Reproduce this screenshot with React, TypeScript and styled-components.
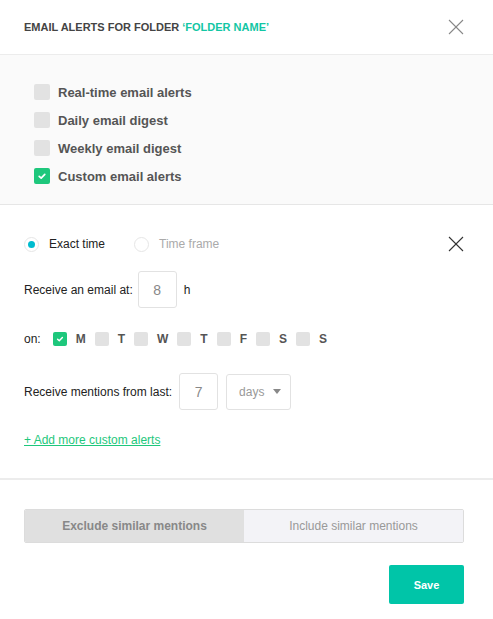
import React from "react";
import styled, { createGlobalStyle } from "styled-components";

const Global = createGlobalStyle`
  html, body { margin: 0; padding: 0; background: #fff; }
  body { font-family: "Liberation Sans", Arial, Helvetica, sans-serif; }
  * { box-sizing: border-box; }
`;

const Panel = styled.div`
  width: 493px;
  height: 619px;
  background: #fff;
  display: flex;
  flex-direction: column;
`;

const Header = styled.div`
  height: 55px;
  padding: 0 29px 0 24px;
  display: flex;
  align-items: center;
  justify-content: space-between;
  border-bottom: 1px solid #ececec;
`;

const Title = styled.div`
  font-size: 11px;
  font-weight: bold;
  color: #444;
  text-transform: uppercase;
`;

const Accent = styled.span`
  color: #12c6a4;
`;

const CloseBtn = styled.button<{ $dark?: boolean }>`
  border: 0;
  background: none;
  padding: 0;
  width: 16px;
  height: 16px;
  display: flex;
  cursor: pointer;
  svg line { stroke: ${(p) => (p.$dark ? "#333" : "#888")}; }
`;

const TypeSection = styled.div`
  background: #fafafa;
  padding: 23px 34px 14px;
  border-bottom: 1px solid #e6e6e6;
  display: flex;
  flex-direction: column;
`;

const TypeRow = styled.label`
  height: 28px;
  display: flex;
  align-items: center;
  gap: 8px;
  font-size: 13px;
  font-weight: bold;
  color: #555;
`;

const Box = styled.span<{ $checked?: boolean; $size: number }>`
  width: ${(p) => p.$size}px;
  height: ${(p) => p.$size}px;
  border-radius: 2px;
  background: ${(p) => (p.$checked ? "#1ec77c" : "#e2e2e2")};
  display: inline-flex;
  align-items: center;
  justify-content: center;
  flex-shrink: 0;
`;

const CustomSection = styled.div`
  padding: 29px 29px 0 24px;
  height: 275px;
  border-bottom: 2px solid #ececec;
  display: flex;
  flex-direction: column;
`;

const ModeRow = styled.div`
  height: 20px;
  display: flex;
  align-items: center;
  justify-content: space-between;
`;

const Radios = styled.div`
  display: flex;
  align-items: center;
`;

const RadioItem = styled.label<{ $active?: boolean }>`
  display: flex;
  align-items: center;
  gap: 10px;
  font-size: 12px;
  color: ${(p) => (p.$active ? "#222" : "#aaa")};
  margin-right: 29px;
`;

const RadioCircle = styled.span<{ $on?: boolean }>`
  width: 15px;
  height: 15px;
  border-radius: 50%;
  border: 1px solid #e6e6e6;
  background: #fff;
  display: inline-flex;
  align-items: center;
  justify-content: center;
  &::after {
    content: "";
    width: 7px;
    height: 7px;
    border-radius: 50%;
    background: ${(p) => (p.$on ? "#00bccf" : "transparent")};
  }
`;

const FieldRow = styled.div<{ $mt: number }>`
  display: flex;
  align-items: center;
  margin-top: ${(p) => p.$mt}px;
  font-size: 12px;
  color: #222;
`;

const NumBox = styled.div<{ $ml: number }>`
  width: 39px;
  height: 37px;
  border: 1px solid #e2e2e2;
  border-radius: 3px;
  display: flex;
  align-items: center;
  justify-content: center;
  font-size: 14px;
  color: #888;
  margin-left: ${(p) => p.$ml}px;
`;

const Unit = styled.span`
  margin-left: 7px;
`;

const Days = styled.div`
  display: flex;
  align-items: center;
  margin-left: 12px;
`;

const Day = styled.label`
  display: flex;
  align-items: center;
  gap: 9px;
  font-size: 12px;
  font-weight: bold;
  color: #555;
  margin-right: 9px;
`;

const Select = styled.div`
  width: 65px;
  height: 36px;
  border: 1px solid #e2e2e2;
  border-radius: 3px;
  display: flex;
  align-items: center;
  justify-content: space-between;
  padding: 0 9px 0 12px;
  font-size: 12px;
  color: #999;
  margin-left: 8px;
`;

const Caret = styled.span`
  width: 0;
  height: 0;
  border-left: 4px solid transparent;
  border-right: 4px solid transparent;
  border-top: 5px solid #888;
`;

const AddLink = styled.a`
  margin-top: 23px;
  font-size: 12px;
  color: #1ec77c;
  text-decoration: underline;
  align-self: flex-start;
  cursor: pointer;
`;

const Footer = styled.div`
  padding: 29px 29px 0 24px;
  display: flex;
  flex-direction: column;
`;

const Toggle = styled.div`
  display: flex;
  height: 34px;
  border: 1px solid #dcdcdc;
  border-radius: 2px;
  overflow: hidden;
`;

const ToggleOpt = styled.button<{ $active?: boolean }>`
  flex: 1;
  border: 0;
  font-family: inherit;
  font-size: 12px;
  font-weight: ${(p) => (p.$active ? "bold" : "normal")};
  background: ${(p) => (p.$active ? "#e0e0e0" : "#f3f3f7")};
  color: ${(p) => (p.$active ? "#888" : "#999")};
  padding: 0;
`;

const Actions = styled.div`
  display: flex;
  justify-content: flex-end;
  margin-top: 22px;
`;

const SaveBtn = styled.button`
  width: 75px;
  height: 39px;
  border: 0;
  border-radius: 2px;
  background: #00c5a8;
  color: #fff;
  font-family: inherit;
  font-size: 11px;
  font-weight: bold;
  cursor: pointer;
`;

const Check = ({ size }: { size: number }) => (
  <svg width={size} height={size} viewBox="0 0 10 10">
    <path d="M3 5.2 L4.4 6.5 L7 3.8" fill="none" stroke="#fff" strokeWidth="1.2" strokeLinecap="round" strokeLinejoin="round" />
  </svg>
);

const XIcon = () => (
  <svg width="16" height="16" viewBox="0 0 16 16">
    <line x1="1" y1="1" x2="15" y2="15" strokeWidth="1.1" />
    <line x1="15" y1="1" x2="1" y2="15" strokeWidth="1.1" />
  </svg>
);

const types = [
  { label: "Real-time email alerts", on: false },
  { label: "Daily email digest", on: false },
  { label: "Weekly email digest", on: false },
  { label: "Custom email alerts", on: true },
];

const days = [
  { d: "M", on: true },
  { d: "T", on: false },
  { d: "W", on: false },
  { d: "T", on: false },
  { d: "F", on: false },
  { d: "S", on: false },
  { d: "S", on: false },
];

export default function App() {
  return (
    <Panel>
      <Global />
      <Header>
        <Title>
          Email alerts for folder <Accent>‘Folder name’</Accent>
        </Title>
        <CloseBtn aria-label="Close">
          <XIcon />
        </CloseBtn>
      </Header>
      <TypeSection>
        {types.map((t) => (
          <TypeRow key={t.label}>
            <Box $size={16} $checked={t.on}>{t.on && <Check size={14} />}</Box>
            {t.label}
          </TypeRow>
        ))}
      </TypeSection>
      <CustomSection>
        <ModeRow>
          <Radios>
            <RadioItem $active>
              <RadioCircle $on />
              Exact time
            </RadioItem>
            <RadioItem>
              <RadioCircle />
              Time frame
            </RadioItem>
          </Radios>
          <CloseBtn $dark aria-label="Remove">
            <XIcon />
          </CloseBtn>
        </ModeRow>
        <FieldRow $mt={17}>
          Receive an email at:
          <NumBox $ml={5}>8</NumBox>
          <Unit>h</Unit>
        </FieldRow>
        <FieldRow $mt={24}>
          on:
          <Days>
            {days.map((x, i) => (
              <Day key={i}>
                <Box $size={14} $checked={x.on}>{x.on && <Check size={12} />}</Box>
                <span>{x.d}</span>
              </Day>
            ))}
          </Days>
        </FieldRow>
        <FieldRow $mt={27}>
          Receive mentions from last:
          <NumBox $ml={7}>7</NumBox>
          <Select>
            days
            <Caret />
          </Select>
        </FieldRow>
        <AddLink>+ Add more custom alerts</AddLink>
      </CustomSection>
      <Footer>
        <Toggle>
          <ToggleOpt $active>Exclude similar mentions</ToggleOpt>
          <ToggleOpt>Include similar mentions</ToggleOpt>
        </Toggle>
        <Actions>
          <SaveBtn>Save</SaveBtn>
        </Actions>
      </Footer>
    </Panel>
  );
}
